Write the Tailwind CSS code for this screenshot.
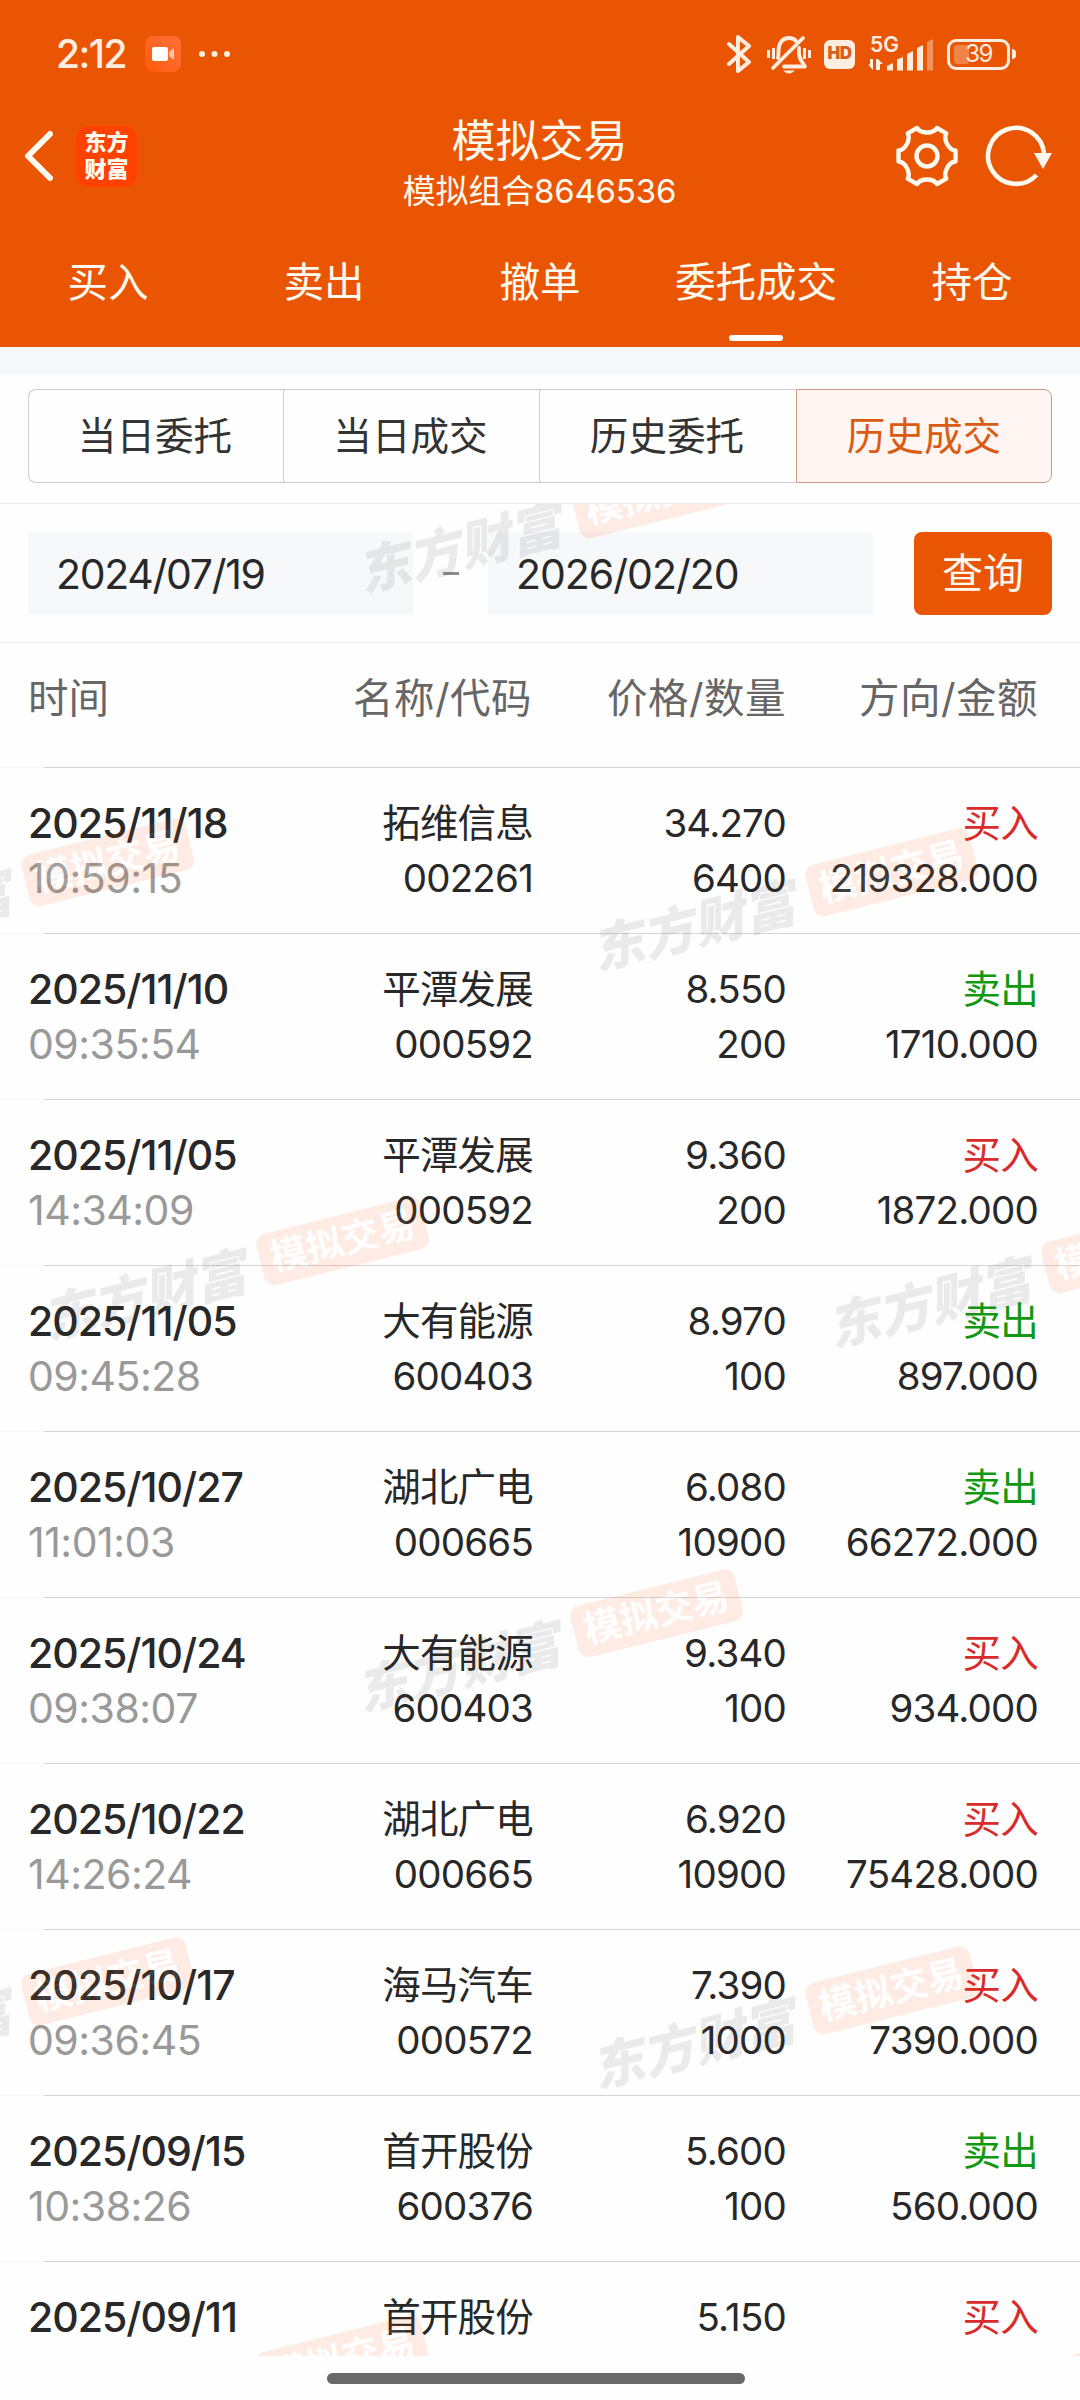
<!DOCTYPE html>
<html lang="zh-CN">
<head>
    <meta charset="UTF-8">
    <meta name="viewport" content="width=device-width, initial-scale=1.0">
    <title>模拟交易</title>
    <script src="https://cdn.jsdelivr.net/npm/@tailwindcss/browser@4"></script>
</head>
<body class="bg-white font-['Inter','Noto_Sans_CJK_SC',sans-serif]">
    <div class="w-[1080px] h-[2400px] flex flex-col overflow-hidden bg-[#fefefe] text-[#282828]">

        <header class="h-[347px] shrink-0 bg-[#ea5504] text-[#fffaf0]">
            <!-- status bar -->
            <div class="h-[108px] pl-[56px] pr-[65px] flex items-center justify-between text-[#ffede0]">
                <div class="flex items-center">
                    <span class="w-[89px] text-[39px] font-medium tracking-[-1.500px]">2:12</span>
                    <span class="w-9 h-9 rounded-lg bg-linear-to-bl from-[#ff7036] to-[#ff5a00] flex items-center justify-center">
                        <svg class="w-6 h-4" viewBox="0 0 24 16"><rect x="1" y="1" width="16" height="14" rx="2" fill="#fff"/><path d="M18 6l5-4v12l-5-4z" fill="#ffc5a8"/></svg>
                    </span>
                    <svg class="w-8 h-2 ml-[18px]" viewBox="0 0 32 8" fill="currentColor"><circle cx="3" cy="4" r="3"/><circle cx="15.5" cy="4" r="3"/><circle cx="28" cy="4" r="3"/></svg>
                </div>
                <div class="flex items-center">
                    <svg class="w-6 h-10" viewBox="0 0 24 40" fill="none" stroke="currentColor" stroke-width="4" stroke-linecap="round" stroke-linejoin="round"><path d="M2 10l20 18-11 9V3l11 9L2 30"/></svg>
                    <svg class="w-[46px] h-10 ml-[15px]" viewBox="0 0 46 40" fill="none" stroke="currentColor" stroke-width="3.8">
                        <path d="M12 24C12.500 22 12.500 20 12.500 17C12.500 9 16.500 4 23 4C26 4 28.500 5 30 7M33 14v5C33 24 35 26.500 39 32.500H18" stroke-linecap="round" stroke-linejoin="round"/>
                        <path d="M37 4L7 34" stroke-linecap="round"/>
                        <path d="M2.500 16v8M7.500 14v11M38.500 14v11M43.500 16v8" stroke-width="3"/>
                        <path d="M17 36.500h12q-6 6-12 0z" fill="currentColor" stroke="none"/>
                    </svg>
                    <span class="w-[31px] h-[29px] ml-3 rounded-[6px] bg-[#ffede0] text-[#d4601c] text-[17px] tracking-[-0.500px] font-black flex items-center justify-center">HD</span>
                    <span class="relative w-[66px] h-[36px] ml-[13px]">
                        <span class="absolute left-0.5 -top-px text-[21px] leading-[20px] font-semibold">5G</span>
                        <svg class="absolute inset-0" viewBox="0 0 66 36" fill="currentColor">
                            <path d="M5 23v11L0 28.500h2V23zM8 34V23h2v11zM10 23l5 5h-3v6H9z"/>
                            <path d="M19 34v-4l6-3v7.500h-6zM29 34.500V23.500l6-2.500v13.500zM39 34.500V18l6-3v19.500zM49 34.500V12l6-3v25.500z"/>
                            <path d="M59 34.500V6l6-3v31.500z" opacity=".4"/>
                        </svg>
                    </span>
                    <span class="relative w-[63px] h-[31px] ml-[13px] rounded-[9px] border-3 border-[#ffede0] flex items-center justify-center text-[24px] leading-none">
                        <span class="absolute left-1 top-[3px] w-[15px] h-[19px] rounded-[3px] bg-[#ffede0]/30"></span>
                        <span class="relative tracking-[-1.500px]">39</span>
                    </span>
                    <span class="w-1 h-[10px] ml-0.5 -mr-px rounded-r bg-[#ffede0]"></span>
                </div>
            </div>

            <!-- title bar -->
            <div class="h-[114px] pl-[22px] pr-[26px] grid grid-cols-[220px_1fr_220px] pt-[7px]">
                <div class="flex items-center h-[82px]">
                    <svg class="w-8 h-[54px]" viewBox="0 0 32 54" fill="none" stroke="currentColor" stroke-width="6" stroke-linecap="round" stroke-linejoin="round"><path d="M28 5L6 27l22 22"/></svg>
                    <span class="w-[61px] h-[61px] ml-[22px] rounded-[12px] bg-[#ff4200] text-[22px] leading-[27px] font-black text-center pt-[3px]">东方<br>财富</span>
                </div>
                <div class="text-center pl-[3px]">
                    <h1 class="text-[44px] leading-[50px] pt-px">模拟交易</h1>
                    <p class="text-[33px] leading-[50px] tracking-[-0.200px]">模拟组合8646536</p>
                </div>
                <div class="flex items-center justify-end h-[82px]">
                    <svg class="w-16 h-16" viewBox="-32 -32 64 64" fill="none" stroke="currentColor" stroke-width="4.400" stroke-linejoin="round">
                        <path d="M-10 -28C-6 -22 6 -22 10 -28L19.300 -22.700C16 -16.200 22 -5.800 28.500 -5.500V5.500C22 5.800 16 16.200 19.300 22.700L10 28C6 22 -6 22 -10 28L-19.300 22.700C-16 16.200 -22 5.800 -28.500 5.500V-5.500C-22 -5.800 -16 -16.200 -19.300 -22.700Z"/>
                        <circle r="10.500"/>
                    </svg>
                    <svg class="w-[68px] h-16 ml-[26px] mr-px" viewBox="-31 -32 68 64">
                        <path d="M28 -2A28 28 0 1 0 20.500 19" fill="none" stroke="currentColor" stroke-width="4.600"/>
                        <path d="M18 -3H36L27 13z" fill="currentColor"/>
                    </svg>
                </div>
            </div>

            <!-- tabs -->
            <nav class="h-[125px] grid grid-cols-5 text-center text-[40.500px] leading-[60px] pt-[31px]">
                <a>买入</a>
                <a>卖出</a>
                <a>撤单</a>
                <a class="flex flex-col items-center">委托成交<span class="w-[54px] h-1.5 mt-[22px] rounded-full bg-white"></span></a>
                <a>持仓</a>
            </nav>
        </header>

        <div class="h-7 shrink-0 bg-[#f7f8fa]"></div>

        <!-- sub tabs -->
        <div class="h-[128px] shrink-0 px-7 pt-3.5">
            <div class="h-[94px] grid grid-cols-[255px_256px_257px_256px] text-center text-[38.600px] leading-[92px] text-[#333]">
                <div class="border border-r-0 border-[#ccc] rounded-l-lg pr-0.5">当日委托</div>
                <div class="border border-r-0 border-[#ccc] pr-0.5">当日成交</div>
                <div class="border border-r-0 border-[#ccc] pr-0.5">历史委托</div>
                <div class="border border-[#c79c80] rounded-r-lg bg-[#fff5f2] text-[#d95b14]">历史成交</div>
            </div>
        </div>

        <main class="relative h-[1853px] shrink-0 overflow-hidden border-t border-[#ececec]">
            <!-- date range -->
            <div class="h-[139px] px-7 flex items-center border-b border-[#ececec] text-[41px]">
                <div class="w-[385px] h-[83px] pl-7 bg-[#f7f8fa] leading-[84px] tracking-[-1.300px]">2024/07/19</div>
                <div class="w-[75px] flex justify-center"><span class="w-4 h-[3px] bg-[#8c8c8c]"></span></div>
                <div class="w-[385px] h-[83px] pl-7 bg-[#f7f8fa] leading-[84px] tracking-[-1px]">2026/02/20</div>
                <button class="w-[138px] h-[83px] ml-auto rounded-lg bg-[#ea5504] text-[#fffaf0] pt-0.5">查询</button>
            </div>

            <div class="h-[124px] pl-7 pb-3 flex items-center text-[40.500px] text-[#666]">
                <div class="w-[265px]">时间</div>
                <div class="w-[239px] text-right tracking-[0.500px]">名称/代码</div>
                <div class="w-[254px] text-right tracking-[0.500px]">价格/数量</div>
                <div class="w-[252px] text-right tracking-[0.500px]">方向/金额</div>
            </div>

            <div id="list"></div>

            <!-- watermark layer -->
            <div id="marks" class="absolute inset-0 pointer-events-none"></div>
        </main>

        <div class="flex-1 pl-[327px] pt-[17px]">
            <div class="w-[418px] h-[11px] rounded-full bg-[#696969]"></div>
        </div>
    </div>

    <script>
        const deals = [
            ["2025/11/18", "10:59:15", "拓维信息", "002261", "34.270", "6400", "买入", "219328.000"],
            ["2025/11/10", "09:35:54", "平潭发展", "000592", "8.550", "200", "卖出", "1710.000"],
            ["2025/11/05", "14:34:09", "平潭发展", "000592", "9.360", "200", "买入", "1872.000"],
            ["2025/11/05", "09:45:28", "大有能源", "600403", "8.970", "100", "卖出", "897.000"],
            ["2025/10/27", "11:01:03", "湖北广电", "000665", "6.080", "10900", "卖出", "66272.000"],
            ["2025/10/24", "09:38:07", "大有能源", "600403", "9.340", "100", "买入", "934.000"],
            ["2025/10/22", "14:26:24", "湖北广电", "000665", "6.920", "10900", "买入", "75428.000"],
            ["2025/10/17", "09:36:45", "海马汽车", "000572", "7.390", "1000", "买入", "7390.000"],
            ["2025/09/15", "10:38:26", "首开股份", "600376", "5.600", "100", "卖出", "560.000"],
            ["2025/09/11", "", "首开股份", "", "5.150", "", "买入", ""]
        ];

        document.getElementById("list").innerHTML = deals.map(d => `
            <div class="h-[166px] flex flex-col">
                <div class="flex h-px"><span class="w-11 bg-[#f6f6f6]"></span><span class="flex-1 bg-[#d4d4d4]"></span></div>
                <div class="pl-7 pt-7 flex text-[38.500px] leading-[55px] tracking-[-0.800px]">
                    <div class="w-[265px] text-[41px]"><p class="font-medium tracking-[-1px]">${d[0]}</p><p class="text-[#999] tracking-[-0.500px]">${d[1]}</p></div>
                    <div class="w-[240px] text-right"><p>${d[2]}</p><p>${d[3]}</p></div>
                    <div class="w-[253px] text-right"><p>${d[4]}</p><p>${d[5]}</p></div>
                    <div class="w-[252px] text-right"><p class="${d[6] == "买入" ? "text-[#d92b2b]" : "text-[#109810]"}">${d[6]}</p><p>${d[7]}</p></div>
                </div>
            </div>`).join("");

        // tag centres inside the list area
        const marks = [[657, -10], [107, 358], [891, 368], [342, 737], [1127, 745], [656, 1109], [107, 1477], [891, 1486], [342, 1855], [1127, 1864]];

        document.getElementById("marks").innerHTML = marks.map(([x, y]) => `
            <div class="absolute w-0 h-0" style="left:${x}px;top:${y}px">
                <div class="w-[400px] h-[60px] -ml-[315px] -mt-[30px] origin-[315px_30px] -rotate-14 flex items-center justify-between opacity-10 whitespace-nowrap">
                    <span class="text-[52px] leading-[60px] pt-3 pl-1.5 font-black italic text-[#444]">东方财富</span>
                    <span class="w-[169px] h-[53px] rounded-[10px] bg-[#ff5000] text-white text-[37px] leading-[52px] font-bold text-center">模拟交易</span>
                </div>
            </div>`).join("");
    </script>
</body>
</html>
